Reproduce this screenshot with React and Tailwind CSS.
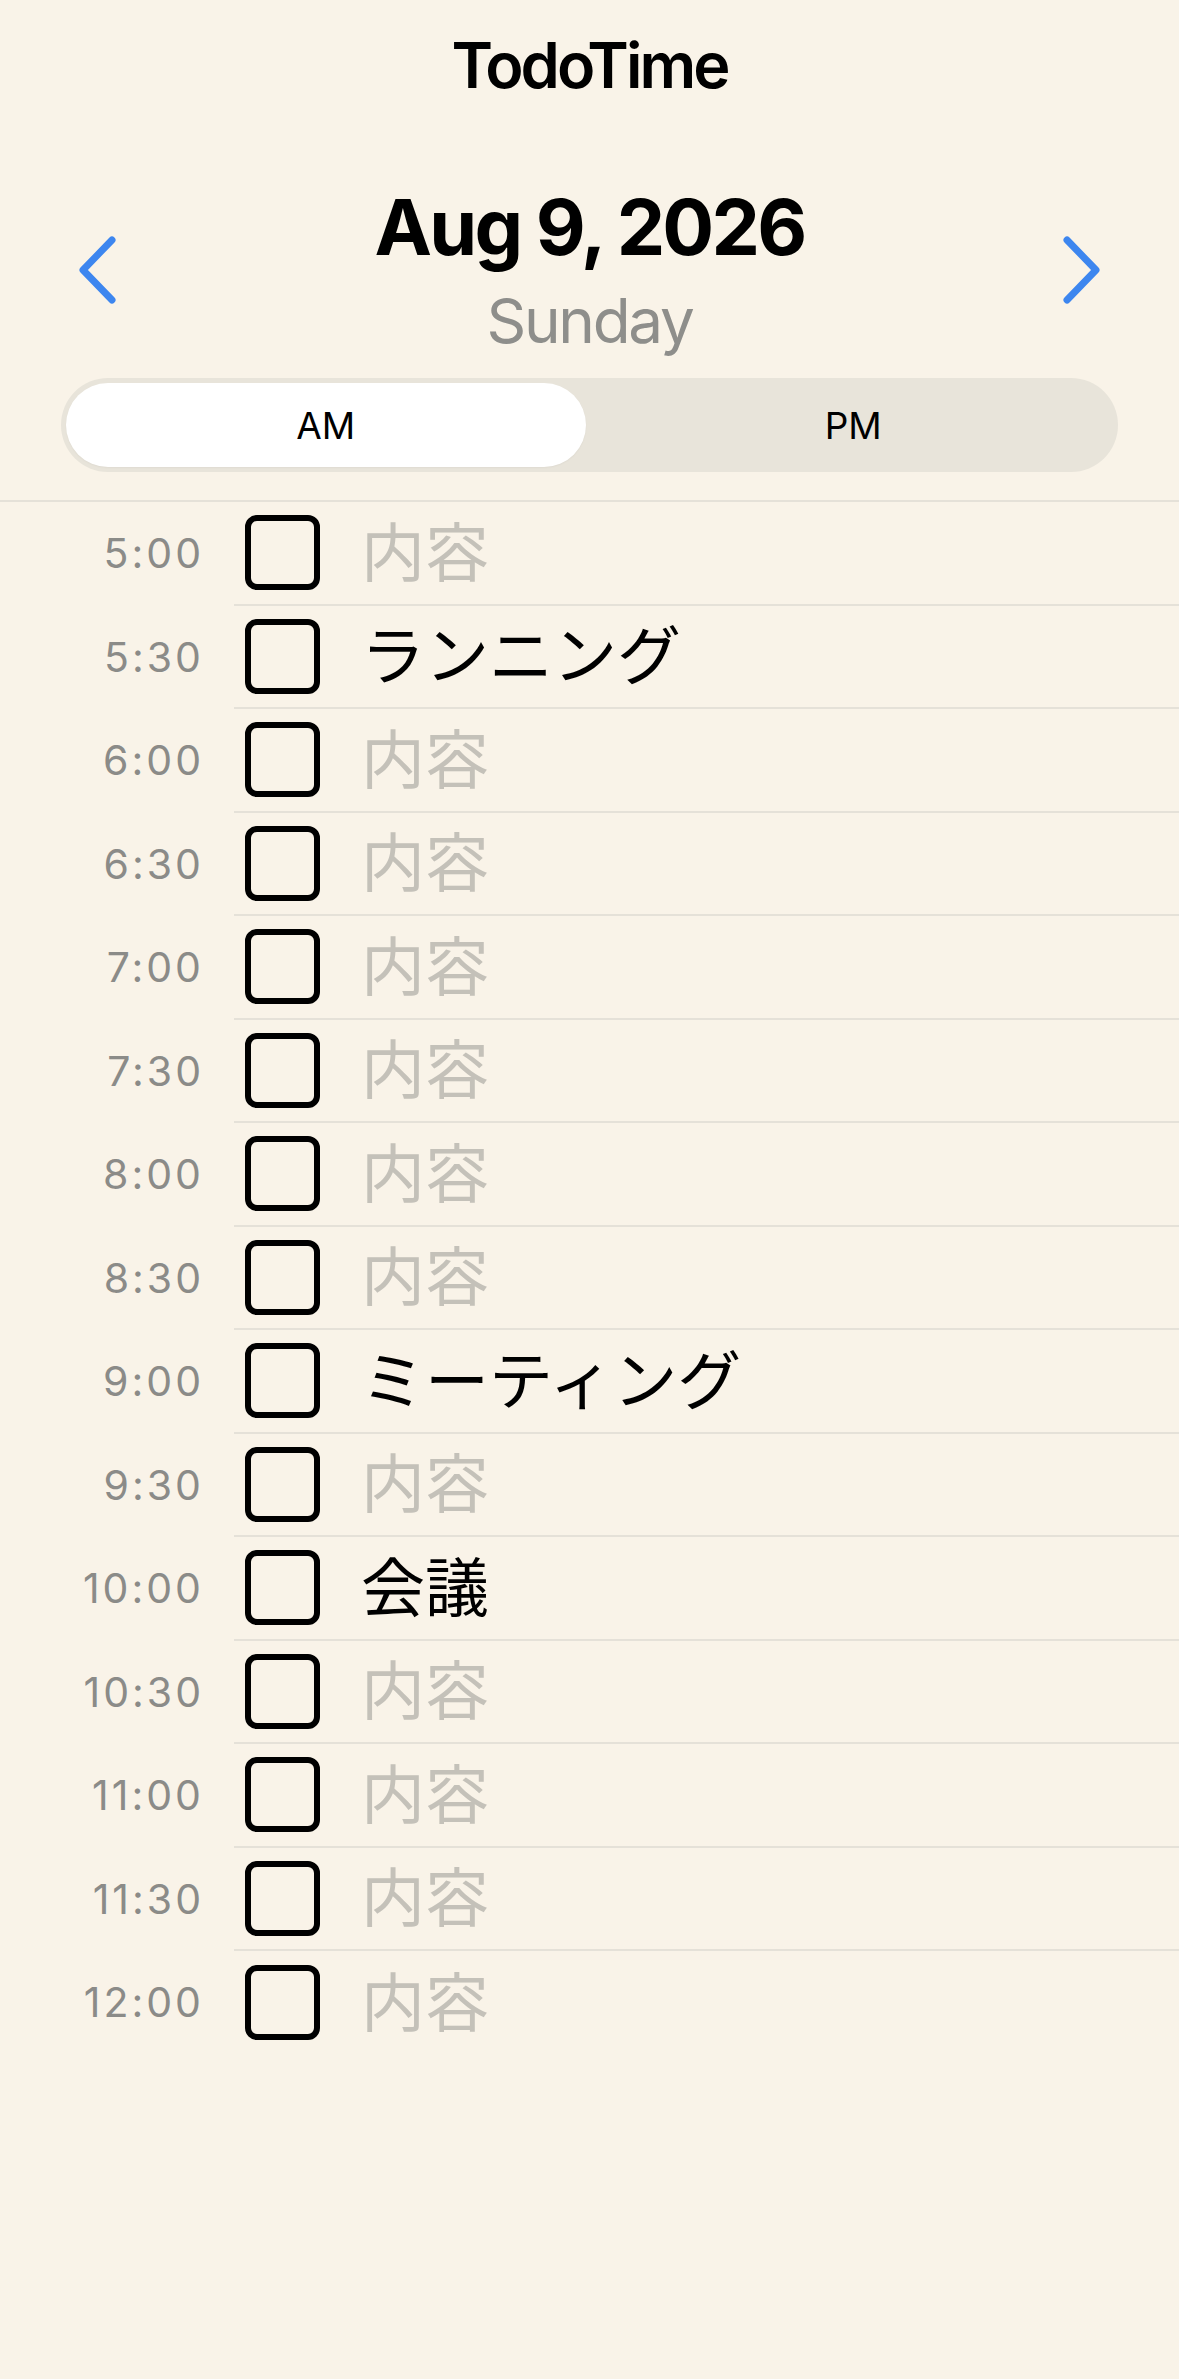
import React from "react";

const rows = [
  { t: "5:00", v: "" },
  { t: "5:30", v: "ランニング" },
  { t: "6:00", v: "" },
  { t: "6:30", v: "" },
  { t: "7:00", v: "" },
  { t: "7:30", v: "" },
  { t: "8:00", v: "" },
  { t: "8:30", v: "" },
  { t: "9:00", v: "ミーティング" },
  { t: "9:30", v: "" },
  { t: "10:00", v: "会議" },
  { t: "10:30", v: "" },
  { t: "11:00", v: "" },
  { t: "11:30", v: "" },
  { t: "12:00", v: "" },
];

function Chevron({ dir }) {
  const pts = dir === "left" ? "52,10 23,40 52,70" : "8,10 37,40 8,70";
  return (
    <svg
      viewBox="0 0 60 80"
      className="w-[60px] h-[80px] shrink-0 mb-[5px]"
      fill="none"
      stroke="#3d86ef"
      strokeWidth="7"
      strokeLinecap="round"
      strokeLinejoin="round"
    >
      <polyline points={pts} />
    </svg>
  );
}

export default function App() {
  return (
    <div className="min-h-screen w-full bg-[#f9f3e8] font-['Inter','Noto_Sans_CJK_JP',sans-serif] text-black">
      <div className="h-[130px] flex items-center justify-center">
        <span className="text-[63px] leading-none font-semibold tracking-[-3px]">TodoTime</span>
      </div>

      <div className="pt-[49px] px-[60px] flex items-center">
        <Chevron dir="left" />
        <div className="flex-1 flex flex-col items-center">
          <div className="h-[96px] flex items-center">
            <span className="text-[77px] leading-none font-bold tracking-[-2.8px]">Aug 9, 2026</span>
          </div>
          <div className="h-[91px] flex items-center">
            <span className="text-[62px] leading-none text-[#8e8e8b] tracking-[-2.3px]">Sunday</span>
          </div>
        </div>
        <Chevron dir="right" />
      </div>

      <div className="mt-[12px] mx-[61px] h-[94px] rounded-full bg-[#e8e4da] p-[5px] flex">
        <div className="flex-1 mr-[8px] rounded-full bg-white flex items-center justify-center shadow-[0_1px_2px_rgba(0,0,0,0.04)]">
          <span className="text-[37px] leading-none">AM</span>
        </div>
        <div className="flex-1 flex items-center justify-center">
          <span className="text-[37px] leading-none">PM</span>
        </div>
      </div>

      <div className="mt-[28px] border-t-2 border-[#e5e1d8]">
        {rows.map((r, i) => (
          <div key={r.t} className="flex h-[103.5px]">
            <div className="w-[234px] pr-[30px] flex items-center justify-end">
              <span className="text-[41px] leading-none text-[#8b8b88] tracking-[3px]">{r.t}</span>
            </div>
            <div
              className={
                i === rows.length - 1
                  ? "flex-1 flex items-center pl-[11px]"
                  : "flex-1 flex items-center pl-[11px] border-b-2 border-[#e5e1d8]"
              }
            >
              <div className="w-[75px] h-[75px] rounded-[12px] border-[6.5px] border-black shrink-0" />
              <span
                className={
                  r.v
                    ? "ml-[41px] text-[64px] leading-none text-black"
                    : "ml-[41px] text-[64px] leading-none text-[#c4c1b9]"
                }
              >
                {r.v || "内容"}
              </span>
            </div>
          </div>
        ))}
      </div>
    </div>
  );
}
